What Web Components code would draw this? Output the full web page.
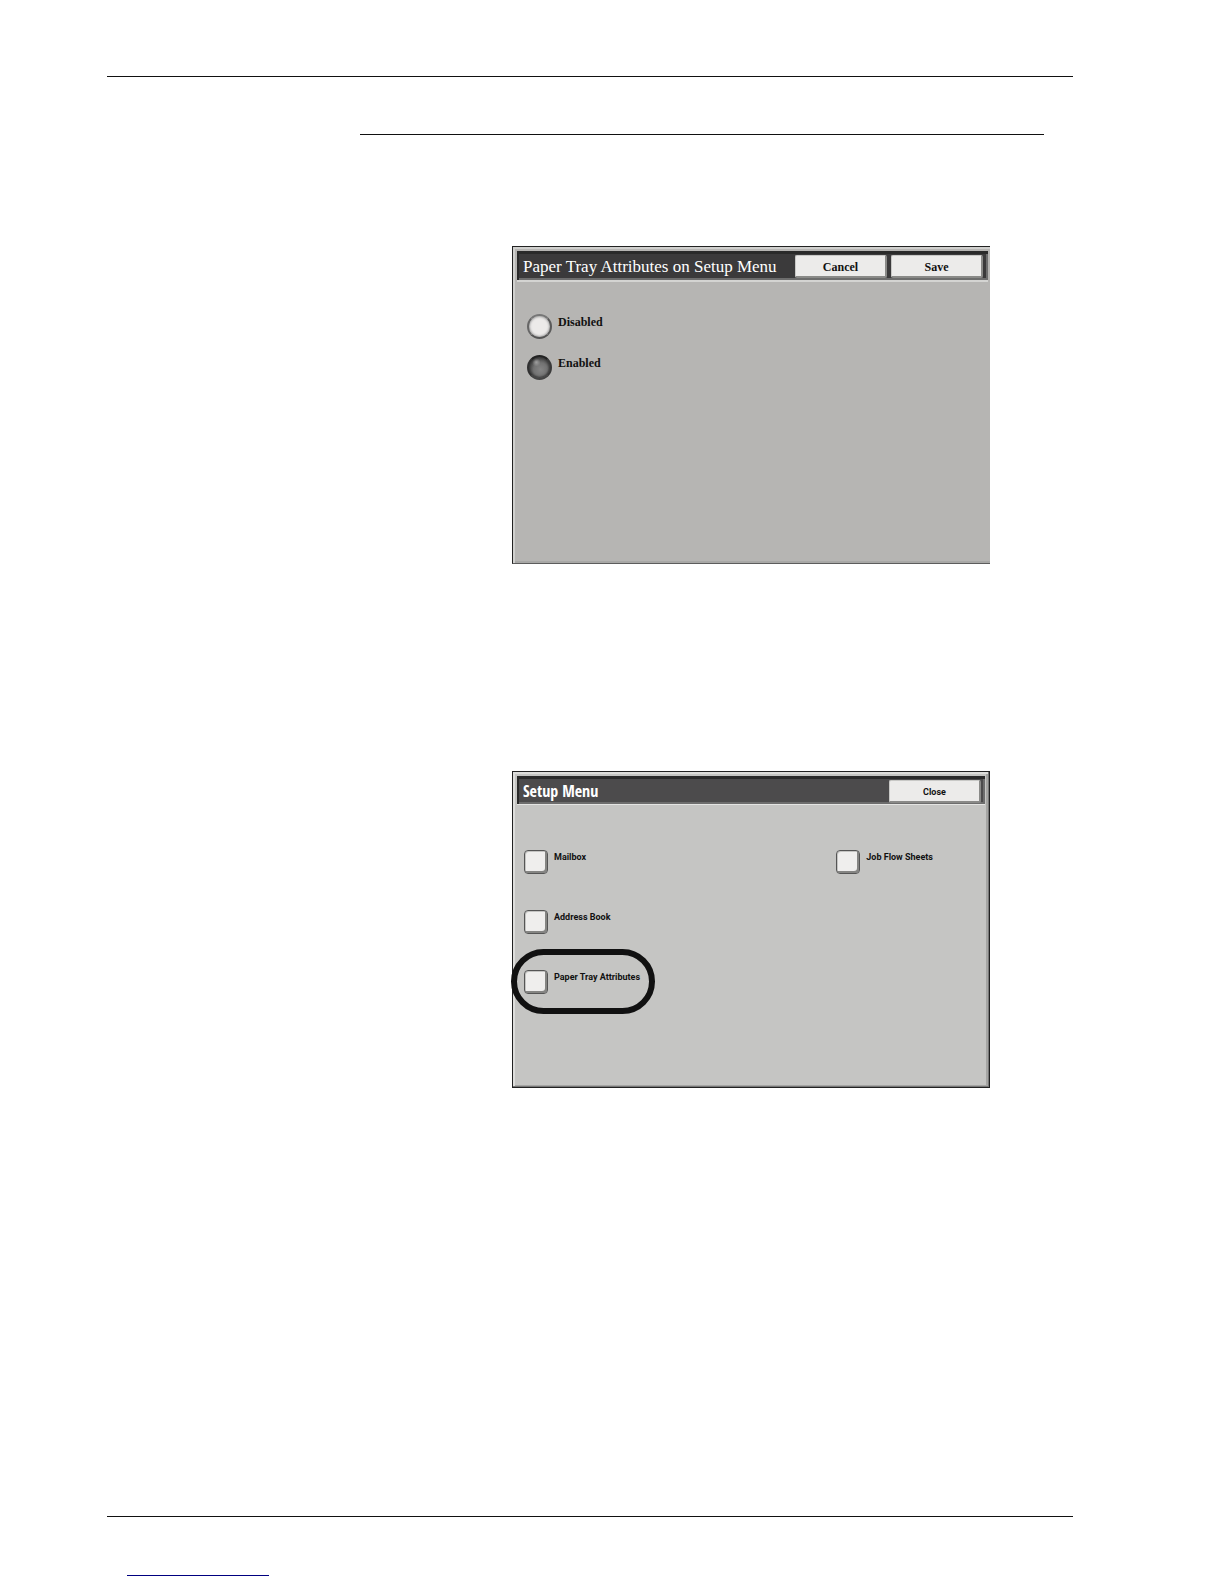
<!DOCTYPE html>
<html lang="en">
<head>
<meta charset="utf-8">
<title>Paper Tray Attributes</title>
<style>
body {
  margin: 0;
  background: #fff;
}
</style>
</head>
<body>
<manual-page>
  <device-screen class="serif" heading="Paper Tray Attributes on Setup Menu">
    <screen-button slot="actions">Cancel</screen-button>
    <screen-button slot="actions">Save</screen-button>
    <radio-options></radio-options>
  </device-screen>
  <device-screen class="sans" heading="Setup Menu">
    <screen-button slot="actions">Close</screen-button>
    <setup-menu>
      <menu-item>Mailbox</menu-item>
      <menu-item>Job Flow Sheets</menu-item>
      <menu-item class="wide">Address Book</menu-item>
      <menu-item class="wide" marked>Paper Tray Attributes</menu-item>
    </setup-menu>
  </device-screen>
</manual-page>

<script>
const define = (name, html) => {
  const template = document.createElement('template')
  template.innerHTML = html
  customElements.define(name, class extends HTMLElement {
    constructor() {
      super()
      this.root = this.attachShadow({ mode: 'open' })
      this.root.append(template.content.cloneNode(true))
    }

    connectedCallback() {
      const heading = this.root.querySelector('.heading')
      if (heading) {
        heading.textContent = this.getAttribute('heading')
      }
    }
  })
}

define('manual-page', `
<style>
:host {
  display: flex;
  flex-direction: column;
  box-sizing: border-box;
  min-height: 100vh;
  padding: 76px 151px 8px 107px;
}
header {
  border-top: 1px solid #111;
}
.section {
  margin: 57px 29px 0 253px;
  border-top: 1px solid #111;
}
main {
  display: grid;
  gap: 207px;
  margin: 111px 83px 60px 405px;
}
footer {
  margin-top: auto;
  border-top: 1px solid #111;
}
a {
  display: block;
  width: 142px;
  height: 58px;
  margin-left: 20px;
  border-bottom: 1px solid #000080;
}
</style>
<header></header>
<div class="section"></div>
<main><slot></slot></main>
<footer><a href="#" aria-label="Contents"></a></footer>
`)

define('device-screen', `
<style>
:host {
  display: block;
  box-sizing: border-box;
  border: 1px solid #222;
  color: #111;
}
:host(.serif) {
  aspect-ratio: 478 / 318;
  padding: 4px 2px 0 4px;
  border-right: none;
  border-bottom-color: #5c5c5c;
  background: #b6b5b3;
  box-shadow: inset 2px 2px #d0d0ce, inset 0 -2px #a8a8a6;
  font: bold 12px/16px "Liberation Serif", serif;
}
:host(.sans) {
  aspect-ratio: 478 / 317;
  padding: 4px 4px 0 4px;
  background: #c5c5c3;
  box-shadow: inset -1px -1px #777, inset 2px 2px #dededc, inset -3px -2px #a5a5a3;
  font: bold 9px/12px Roboto, "Liberation Sans", sans-serif;
}
.bar {
  display: flex;
  align-items: center;
  gap: 4px;
  box-sizing: border-box;
  height: 29px;
  padding: 2px 5px 0 6px;
  border-bottom: 1px solid #e4e4e2;
  background: #3b3a3b;
  box-shadow: inset 2px 3px #2a2a2a, inset -2px -2px #6d6d6d;
  color: #fff;
}
:host(.serif) .bar {
  height: 31px;
  border-bottom-width: 2px;
  border-bottom-color: #d4d4d2;
}
:host(.sans) .bar {
  padding-right: 4px;
  background: #4c4b4c;
}
.heading {
  flex: 1;
  margin: 0;
  white-space: nowrap;
  font: 17px/20px "Liberation Serif", serif;
}
:host(.sans) .heading {
  font: bold 16px/20px "Liberation Sans Narrow", "Open Sans Condensed", Roboto, sans-serif;
}
</style>
<div class="bar">
  <h2 class="heading"></h2>
  <slot name="actions"></slot>
</div>
<slot></slot>
`)

define('screen-button', `
<style>
:host {
  display: block;
  width: 92px;
}
button {
  display: block;
  width: 100%;
  height: 23px;
  padding: 2px 0 0;
  border: 1px solid;
  border-width: 1px 2px 2px 1px;
  border-color: #c8c8c6 #8a8a88 #8a8a88 #c8c8c6;
  border-radius: 2px;
  background: #ecebea;
  color: #111;
  font: inherit;
}
</style>
<button type="button"><slot></slot></button>
`)

define('radio-options', `
<style>
:host {
  display: grid;
  gap: 16px;
  padding: 32px 10px;
}
label {
  display: flex;
  align-items: flex-start;
  gap: 6px;
}
input {
  appearance: none;
  box-sizing: border-box;
  width: 25px;
  height: 25px;
  margin: 0;
  border: 2px solid;
  border-color: #777 #5a5a5a #555 #666;
  border-radius: 50%;
  background: #eceae9;
  box-shadow: inset 0 0 2px 1px #aaa;
}
input:checked {
  border-color: #222 #3a3a3a #444 #303030;
  background: radial-gradient(circle at 35% 25%, #a0a0a0 0, transparent 20%),
    radial-gradient(circle at 55% 60%, #858585 0, #727272 40%, #3c3c3c 75%);
  box-shadow: inset 0 0 2px 1px #3c3c3c;
}
</style>
<label><input type="radio" name="setting">Disabled</label>
<label><input type="radio" name="setting" checked>Enabled</label>
`)

define('setup-menu', `
<style>
:host {
  display: grid;
  grid-template-columns: 21fr 10fr;
  row-gap: 36px;
  padding: 45px 0 0 7px;
}
::slotted(.wide) {
  grid-column: 1 / -1;
}
</style>
<slot></slot>
`)

define('menu-item', `
<style>
:host {
  display: block;
  position: relative;
}
button {
  display: flex;
  gap: 6px;
  padding: 0;
  border: none;
  background: none;
  color: #111;
  font: inherit;
  white-space: nowrap;
}
.key {
  box-sizing: border-box;
  width: 24px;
  height: 24px;
  border: 1px solid #555;
  border-radius: 4px;
  background: #efeeed;
  box-shadow: inset -2px -2px #858583, inset 1px 1px #c4c4c2;
}
.text {
  padding-top: 1px;
}
.mark {
  display: none;
  position: absolute;
  top: -21px;
  left: -13px;
  box-sizing: border-box;
  width: 144px;
  height: 65px;
  border: 6px solid #111;
  border-radius: 33px;
  pointer-events: none;
}
:host([marked]) .mark {
  display: block;
}
</style>
<button type="button"><span class="key"></span><span class="text"><slot></slot></span></button>
<span class="mark"></span>
`)
</script>
</body>
</html>
